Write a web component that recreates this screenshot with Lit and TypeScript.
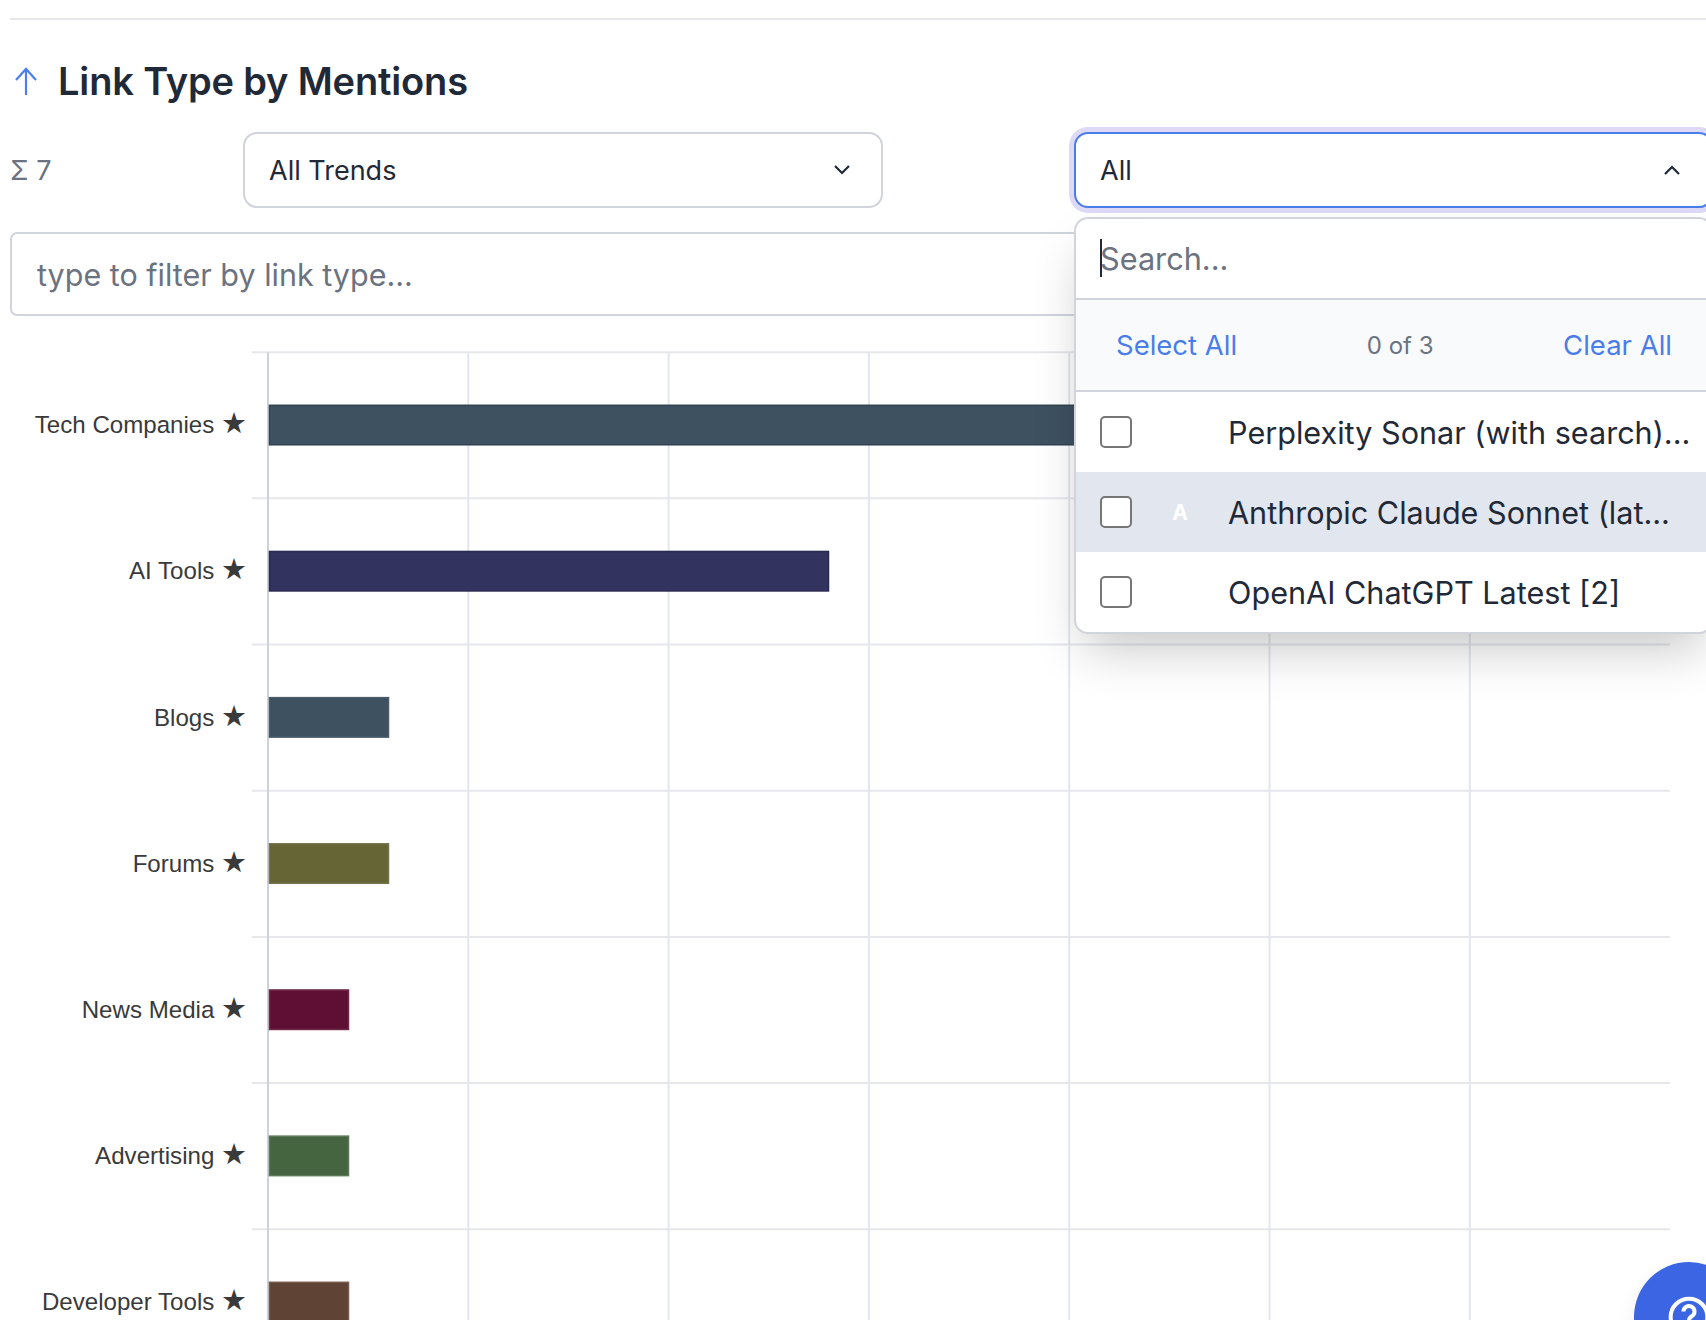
import {LitElement, html, svg, css} from "lit";
import {customElement} from "lit/decorators.js";

const AXIS_X = 268;
const UNIT = 40;
const ROW_H = 146.17;
const TOP_Y = 352.2;

const rows = [
  {label: "Tech Companies", value: 24, color: "#3e5161", edge: "#32434f"},
  {label: "AI Tools", value: 14, color: "#333360", edge: "#2a2a50"},
  {label: "Blogs", value: 3, color: "#3e5161", edge: "#4a5b69"},
  {label: "Forums", value: 3, color: "#666536", edge: "#74734b"},
  {label: "News Media", value: 2, color: "#5f0f34", edge: "#6f2a49"},
  {label: "Advertising", value: 2, color: "#456540", edge: "#5c7757"},
  {label: "Developer Tools", value: 2, color: "#5f4335", edge: "#75594c"},
];

const options = [
  {name: "Perplexity Sonar (with search)...", badge: "", active: false},
  {name: "Anthropic Claude Sonnet (lat...", badge: "A", active: true},
  {name: "OpenAI ChatGPT Latest [2]", badge: "", active: false},
];

@customElement("app-root")
export class AppRoot extends LitElement {
  static styles = css`
    :host {
      display: block;
      position: relative;
      width: 1706px;
      height: 1320px;
      overflow: hidden;
      background: #fff;
      font-family: Inter, "Liberation Sans", sans-serif;
      color: #1f2937;
    }
    .top {
      padding: 18px 0 0 10px;
      width: 1703px;
    }
    .rule {
      height: 2px;
      background: #e5e7eb;
    }
    .title-row {
      display: flex;
      align-items: center;
      gap: 20px;
      height: 44px;
      margin-top: 39px;
      padding-left: 4px;
    }
    .title-row svg {
      display: block;
    }
    h2 {
      margin: 0;
      font-size: 38px;
      font-weight: 600;
      line-height: 44px;
      letter-spacing: -0.15px;
      color: #1f2937;
    }
    .controls {
      display: grid;
      grid-template-columns: 233px 640px 191px 639px;
      align-items: center;
      margin-top: 29px;
    }
    .sum {
      font-size: 27px;
      color: #6b7280;
    }
    .select {
      box-sizing: border-box;
      height: 76px;
      display: flex;
      align-items: center;
      justify-content: space-between;
      padding: 0 31.5px 0 24px;
      border: 2px solid #d1d5db;
      border-radius: 14px;
      background: #fff;
      font-size: 27px;
    }
    .select-wrap {
      position: relative;
      z-index: 5;
    }
    .select.open {
      border-color: #4b7de9;
      box-shadow: 0 0 0 5px #dcdaf6;
    }
    .filter {
      box-sizing: border-box;
      display: block;
      width: 100%;
      height: 84px;
      margin-top: 24px;
      padding: 0 25px;
      border: 2px solid #d1d5db;
      border-radius: 7px;
      font: 30.5px Inter, "Liberation Sans", sans-serif;
      outline: none;
    }
    .filter::placeholder,
    .search input::placeholder {
      color: #6b7280;
      opacity: 1;
    }
    .chart {
      display: block;
    }
    .chart text {
      font-family: "Liberation Sans", Arial, sans-serif;
      font-size: 24.1px;
      fill: #3a3a3a;
    }
    .chart text .star {
      font-family: "DejaVu Sans", sans-serif;
      font-size: 29px;
    }
    .menu {
      position: absolute;
      top: 85px;
      left: 0;
      right: 0;
      box-sizing: border-box;
      border: 2px solid #d1d5db;
      border-radius: 14px;
      background: #fff;
      overflow: hidden;
      box-shadow: 0 25px 50px -10px rgba(0, 0, 0, 0.22);
    }
    .search {
      position: relative;
      box-sizing: border-box;
      height: 81px;
      padding: 0 24px;
      display: flex;
      align-items: center;
      border-bottom: 2px solid #d1d5db;
    }
    .search input {
      width: 100%;
      border: none;
      padding: 0;
      outline: none;
      background: transparent;
      font: 30.7px Inter, "Liberation Sans", sans-serif;
    }
    .caret {
      position: absolute;
      left: 24px;
      top: 20px;
      width: 1.5px;
      height: 38px;
      background: #1f2937;
    }
    .actions {
      box-sizing: border-box;
      height: 92px;
      display: flex;
      align-items: center;
      justify-content: space-between;
      padding: 0 39px 0 40px;
      background: #f9fafb;
      border-bottom: 2px solid #d1d5db;
      font-size: 27.5px;
      color: #4b7de9;
    }
    .actions .count {
      font-size: 24px;
      color: #6b7280;
    }
    .option {
      height: 80px;
      display: flex;
      align-items: center;
      padding-left: 24px;
      font-size: 30.6px;
      white-space: nowrap;
    }
    .option.active {
      background: #e2e6ee;
    }
    .option input {
      appearance: none;
      box-sizing: border-box;
      flex: none;
      width: 32px;
      height: 32px;
      margin: 0;
      border: 2px solid #767676;
      border-radius: 5px;
      background: #fff;
    }
    .badge {
      flex: none;
      width: 96px;
      text-align: center;
      font-size: 21px;
      font-weight: 700;
      color: #fff;
    }
    .help {
      position: absolute;
      left: 1634px;
      top: 1262px;
      width: 110px;
      height: 110px;
      display: flex;
      align-items: center;
      justify-content: center;
      border-radius: 50%;
      background: #3b65e3;
      box-shadow: 0 8px 20px rgba(0, 0, 0, 0.08);
    }
  `;

  renderChart() {
    const verticals = Array.from({length: 7}, (_, i) => AXIS_X + i * 200.3);
    const horizontals = Array.from({length: 7}, (_, i) => TOP_Y + i * ROW_H);
    return html`
      <svg class="chart" width="1706" height="1004" viewBox="0 316 1706 1004">
        ${horizontals.map(
          (y) => svg`<line x1="252" x2="1670" y1=${y} y2=${y} stroke="#e5e7eb" stroke-width="2" />`,
        )}
        ${verticals.slice(1).map(
          (x) => svg`<line x1=${x} x2=${x} y1=${TOP_Y} y2="1320" stroke="#e2e6ee" stroke-width="2" />`,
        )}
        <line x1=${AXIS_X} x2=${AXIS_X} y1=${TOP_Y} y2="1320" stroke="#cbd2dc" stroke-width="2" />
        ${rows.map((row, i) => {
          const mid = TOP_Y + ROW_H * (i + 0.5);
          return svg`
            <rect x="269.5" y=${mid - 20} width=${row.value * UNIT - 1} height="39.5"
              fill=${row.color} stroke=${row.edge} stroke-width="1.5" />
            <text x="247" y=${mid + 8} text-anchor="end">${row.label} <tspan class="star">★</tspan></text>
          `;
        })}
      </svg>
    `;
  }

  render() {
    return html`
      <div class="top">
        <div class="rule"></div>
        <div class="title-row">
          <svg width="24" height="28" viewBox="0 0 24 28" fill="none" stroke="#4b7fee" stroke-width="2.2">
            <path d="M12 2v26M2 13L12 2l10 11" />
          </svg>
          <h2>Link Type by Mentions</h2>
        </div>
        <div class="controls">
          <div class="sum">Σ 7</div>
          <div class="select">
            <span>All Trends</span>
            <svg width="16" height="10" viewBox="0 0 16 10" fill="none" stroke="#1f2937" stroke-width="2.2">
              <path d="M1 1l7 7 7-7" />
            </svg>
          </div>
          <div></div>
          <div class="select-wrap">
            <div class="select open">
              <span>All</span>
              <svg width="16" height="10" viewBox="0 0 16 10" fill="none" stroke="#1f2937" stroke-width="2.2">
                <path d="M1 9l7-7 7 7" />
              </svg>
            </div>
            <div class="menu">
              <div class="search">
                <input placeholder="Search..." />
                <span class="caret"></span>
              </div>
              <div class="actions">
                <span>Select All</span>
                <span class="count">0 of 3</span>
                <span>Clear All</span>
              </div>
              ${options.map(
                (o) => html`
                  <div class="option ${o.active ? "active" : ""}">
                    <input type="checkbox" />
                    <span class="badge">${o.badge}</span>
                    <span>${o.name}</span>
                  </div>
                `,
              )}
            </div>
          </div>
        </div>
        <input class="filter" placeholder="type to filter by link type..." />
      </div>
      ${this.renderChart()}
      <div class="help">
        <svg width="44" height="44" viewBox="0 0 24 24" fill="none" stroke="#fff" stroke-width="2.2">
          <circle cx="12" cy="12" r="10" />
          <path d="M9 9a3 3 0 1 1 4.5 2.6c-1 .6-1.5 1.2-1.5 2.4" />
          <circle cx="12" cy="17.5" r="0.6" />
        </svg>
      </div>
    `;
  }
}
